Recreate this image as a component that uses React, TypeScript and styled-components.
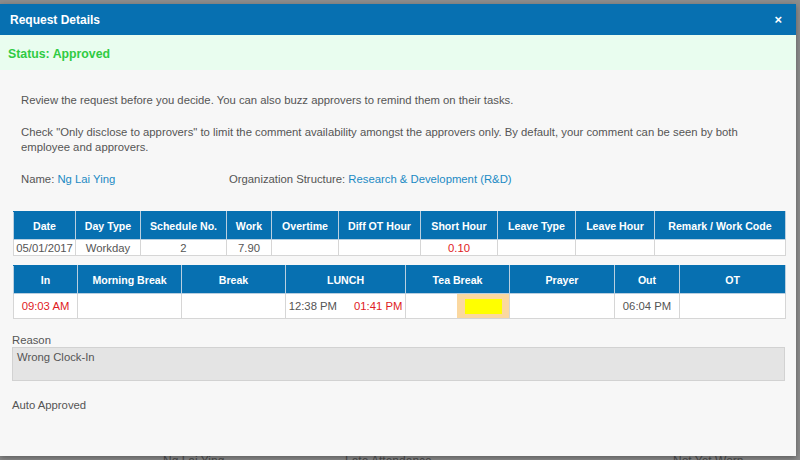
import { createGlobalStyle, styled } from "styled-components"

const GlobalStyle = createGlobalStyle`
  html, body {
    margin: 0;
    padding: 0;
    width: 800px;
    height: 460px;
    overflow: hidden;
    background: #8d8d8d;
    font-family: "Liberation Sans", Arial, sans-serif;
  }
`

const Page = styled.div`
  position: relative;
  width: 800px;
  height: 460px;
  background: #8d8d8d;
`

const BackdropRow = styled.div`
  display: grid;
  grid-template-columns: 163px 182px 328px 1fr;
  padding-top: 455px;
  color: #333;
  font-size: 12px;
  line-height: 12px;
  opacity: 0.7;
`

const Modal = styled.div`
  position: absolute;
  top: 4px;
  left: 0;
  width: 796px;
  height: 452px;
  background: #f7f7f7;
  display: flex;
  flex-direction: column;
  box-shadow: 0 2px 6px rgba(0, 0, 0, 0.35);
`

const Header = styled.div`
  height: 31px;
  background: #0770b1;
  display: flex;
  align-items: center;
  justify-content: space-between;
  padding: 0 14px 0 10px;
  color: #fff;
`

const Title = styled.div`
  font-size: 12px;
  font-weight: bold;
`

const Close = styled.div`
  font-size: 13px;
  font-weight: bold;
  line-height: 1;
`

const StatusBar = styled.div`
  height: 35px;
  background: #e9fdef;
  display: flex;
  align-items: center;
  padding: 2px 0 0 8px;
  box-sizing: border-box;
  color: #2fcb43;
  font-size: 12.3px;
  font-weight: bold;
`

const Body = styled.div`
  padding: 23px 12px 0 12px;
  display: flex;
  flex-direction: column;
  color: #555;
  font-size: 11.3px;
`

const Intro = styled.div`
  padding: 0 9px;
  display: flex;
  flex-direction: column;
  gap: 17px;
  line-height: 15px;
`

const InfoRow = styled.div`
  display: grid;
  grid-template-columns: 208px 1fr;
  padding: 17px 9px 0 9px;
  line-height: 15px;
`

const Link = styled.span`
  color: #1b8ac4;
`

const Table = styled.table<{ $top: number }>`
  width: 772px;
  margin-left: 1px;
  border-collapse: collapse;
  table-layout: fixed;
  margin-top: ${p => p.$top}px;
  border: 1px solid #d6d6d6;
  background: #fff;
`

const Th = styled.th`
  background: #0770b1;
  color: #fff;
  font-size: 10.6px;
  font-weight: bold;
  height: 27px;
  padding: 0;
  border: 1px solid #b9cfe0;
  border-top-color: #0770b1;
  text-align: center;
`

const Td = styled.td<{ $h: number; $red?: boolean }>`
  height: ${p => p.$h}px;
  padding: 0;
  border: 1px solid #d6d6d6;
  text-align: center;
  color: ${p => (p.$red ? "#e01b24" : "#555")};
  font-size: 11.3px;
`

const LunchCell = styled.div`
  display: flex;
  justify-content: center;
  gap: 17px;
`

const Red = styled.span`
  color: #e01b24;
`

const TeaCell = styled.div`
  display: flex;
  justify-content: flex-end;
  height: 100%;
`

const TeaMark = styled.div`
  width: 52px;
  background: #fbd8a0;
  display: flex;
  align-items: center;
  justify-content: center;
`

const YellowBox = styled.div`
  width: 37px;
  height: 15px;
  background: #ffff00;
`

const Label = styled.div`
  margin-top: 15px;
  color: #555;
`

const ReasonBox = styled.div`
  margin-top: 1px;
  height: 34px;
  width: 773px;
  background: #e4e4e4;
  border: 1px solid #d2d2d2;
  padding: 3px 4px;
  box-sizing: border-box;
  color: #555;
`

const AutoText = styled.div`
  margin-top: 18px;
  color: #555;
`

const cols1 = [62, 65, 86, 45, 67, 82, 77, 78, 79, 131]
const head1 = ["Date", "Day Type", "Schedule No.", "Work", "Overtime", "Diff OT Hour", "Short Hour", "Leave Type", "Leave Hour", "Remark / Work Code"]
const cols2 = [64, 104, 104, 120, 104, 105, 65, 106]
const head2 = ["In", "Morning Break", "Break", "LUNCH", "Tea Break", "Prayer", "Out", "OT"]

export default function App() {
  return (
    <Page>
      <GlobalStyle />
      <BackdropRow>
        <span />
        <span>Ng Lai Ying</span>
        <span>Late Attendance</span>
        <span>Not Yet Worn</span>
      </BackdropRow>
      <Modal>
        <Header>
          <Title>Request Details</Title>
          <Close>×</Close>
        </Header>
        <StatusBar>Status: Approved</StatusBar>
        <Body>
          <Intro>
            <div>Review the request before you decide. You can also buzz approvers to remind them on their tasks.</div>
            <div>
              Check "Only disclose to approvers" to limit the comment availability amongst the approvers only. By default, your comment can be seen by both<br />
              employee and approvers.
            </div>
          </Intro>
          <InfoRow>
            <div>Name: <Link>Ng Lai Ying</Link></div>
            <div>Organization Structure: <Link>Research &amp; Development (R&amp;D)</Link></div>
          </InfoRow>
          <Table $top={24}>
            <colgroup>
              {cols1.map((w, i) => <col key={i} style={{ width: w }} />)}
            </colgroup>
            <thead>
              <tr>{head1.map(h => <Th key={h}>{h}</Th>)}</tr>
            </thead>
            <tbody>
              <tr>
                <Td $h={15}>05/01/2017</Td>
                <Td $h={15}>Workday</Td>
                <Td $h={15}>2</Td>
                <Td $h={15}>7.90</Td>
                <Td $h={15} />
                <Td $h={15} />
                <Td $h={15} $red>0.10</Td>
                <Td $h={15} />
                <Td $h={15} />
                <Td $h={15} />
              </tr>
            </tbody>
          </Table>
          <Table $top={9}>
            <colgroup>
              {cols2.map((w, i) => <col key={i} style={{ width: w }} />)}
            </colgroup>
            <thead>
              <tr>{head2.map(h => <Th key={h}>{h}</Th>)}</tr>
            </thead>
            <tbody>
              <tr>
                <Td $h={24} $red>09:03 AM</Td>
                <Td $h={24} />
                <Td $h={24} />
                <Td $h={24}>
                  <LunchCell>
                    <span>12:38 PM</span>
                    <Red>01:41 PM</Red>
                  </LunchCell>
                </Td>
                <Td $h={24}>
                  <TeaCell>
                    <TeaMark><YellowBox /></TeaMark>
                  </TeaCell>
                </Td>
                <Td $h={24} />
                <Td $h={24}>06:04 PM</Td>
                <Td $h={24} />
              </tr>
            </tbody>
          </Table>
          <Label>Reason</Label>
          <ReasonBox>Wrong Clock-In</ReasonBox>
          <AutoText>Auto Approved</AutoText>
        </Body>
      </Modal>
    </Page>
  )
}
